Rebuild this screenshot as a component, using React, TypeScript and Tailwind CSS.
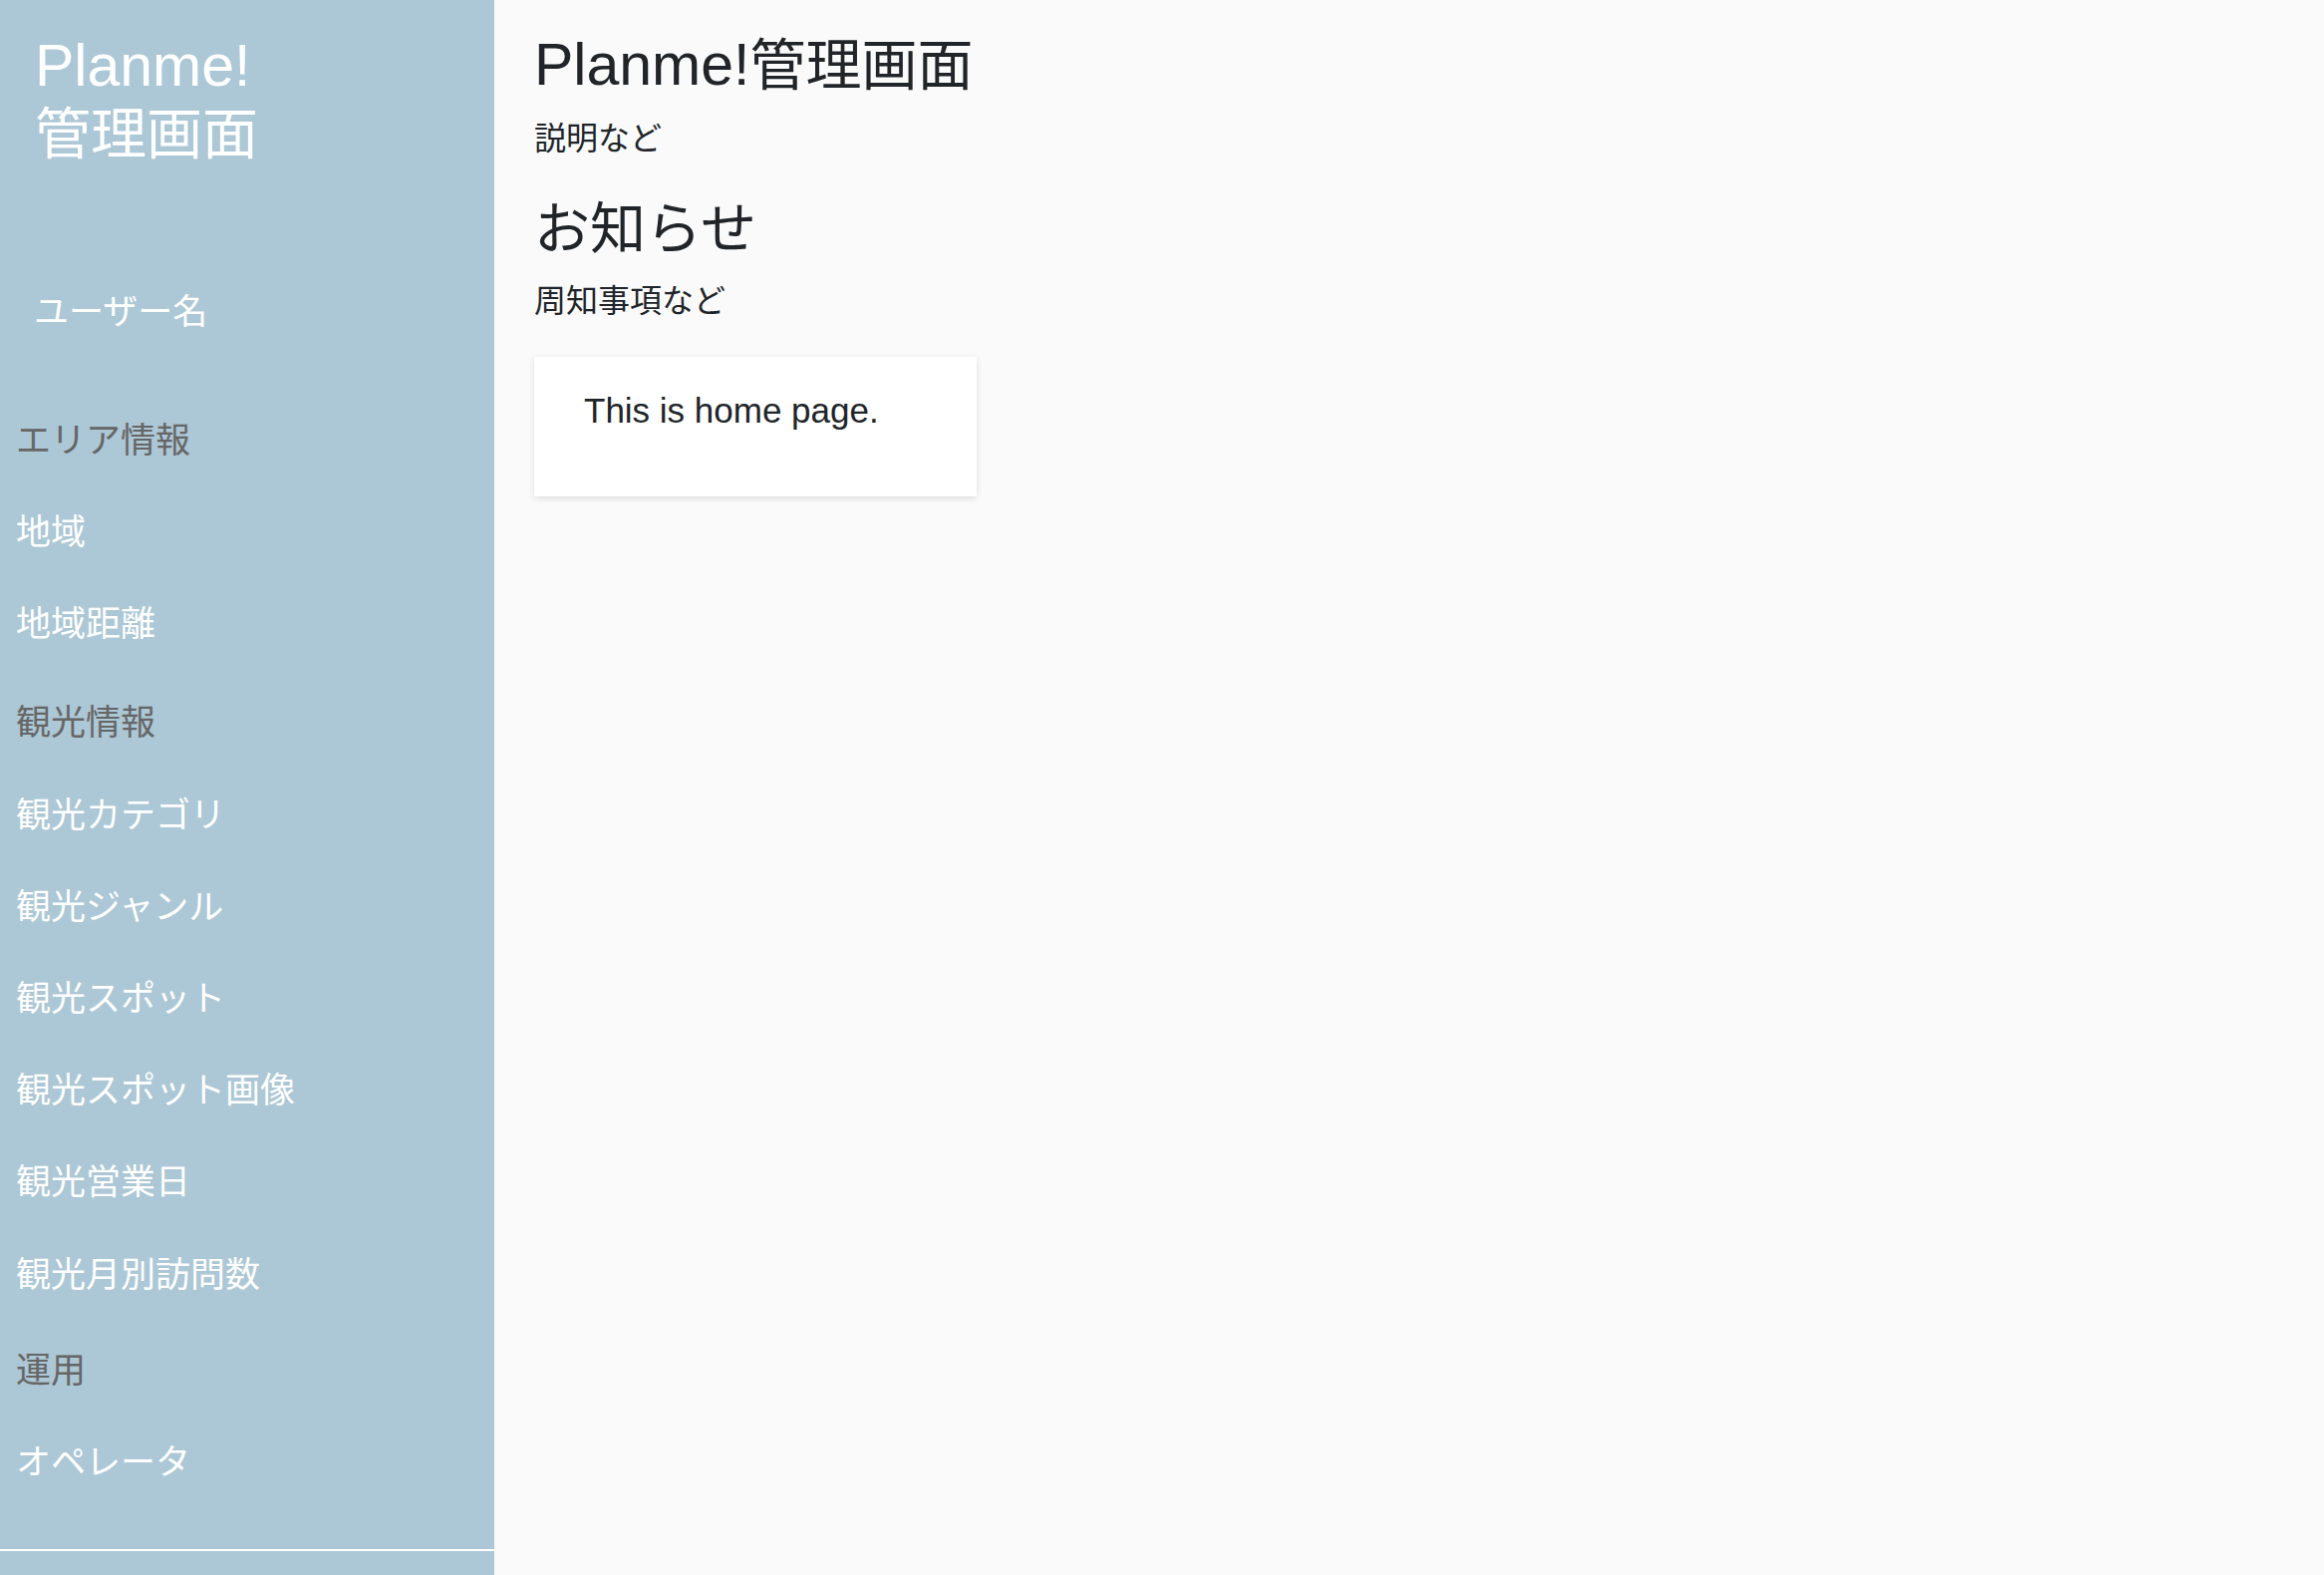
import React from "react";

const navItems = [
  { label: "エリア情報", cls: "mt-1 text-[#666]" },
  { label: "地域", cls: "text-white" },
  { label: "地域距離", cls: "text-white" },
  { label: "観光情報", cls: "mt-[7px] text-[#666]" },
  { label: "観光カテゴリ", cls: "text-white" },
  { label: "観光ジャンル", cls: "text-white" },
  { label: "観光スポット", cls: "text-white" },
  { label: "観光スポット画像", cls: "text-white" },
  { label: "観光営業日", cls: "text-white" },
  { label: "観光月別訪問数", cls: "text-white" },
  { label: "運用", cls: "mt-1 text-[#666]" },
  { label: "オペレータ", cls: "text-white" },
];

export default function App() {
  return (
    <div className="flex h-screen font-['Liberation_Sans','Noto_Sans_CJK_JP',sans-serif]">
      <aside className="w-[496px] shrink-0 bg-[#acc7d5] flex flex-col">
        <div className="pl-[35px] pt-[32px] text-[56px] leading-[68px] text-white">
          <span className="text-[59px]">Planme!</span>
          <br />
          管理画面
        </div>
        <div className="pl-[34px] mt-[120px] text-[35px] leading-[48px] text-white">ユーザー名</div>
        <nav className="mt-[55px]">
          <ul>
            {navItems.map((item) => (
              <li key={item.label} className={"h-[92.2px] flex items-center px-4 text-[35px] " + item.cls}>
                {item.label}
              </li>
            ))}
          </ul>
        </nav>
        <div className="mt-[41px] border-t-2 border-white"></div>
      </aside>

      <main className="flex-1 bg-[#fafafa] pl-10 pt-8 text-[#212529]">
        <h3 className="text-[56px] leading-[67px]">
          <span className="text-[59px]">Planme!</span>管理画面
        </h3>
        <p className="mt-[16px] text-[32px] leading-[48px]">説明など</p>
        <h3 className="mt-[33px] text-[56px] leading-[67px]">お知らせ</h3>
        <p className="mt-[15px] text-[32px] leading-[48px]">周知事項など</p>
        <div className="mt-[32px] w-[444px] h-[140px] bg-white pt-[28px] pl-[50px] shadow-[0_2px_6px_rgba(0,0,0,0.12)]">
          <p className="text-[35px] leading-[52px]">This is home page.</p>
        </div>
      </main>
    </div>
  );
}
